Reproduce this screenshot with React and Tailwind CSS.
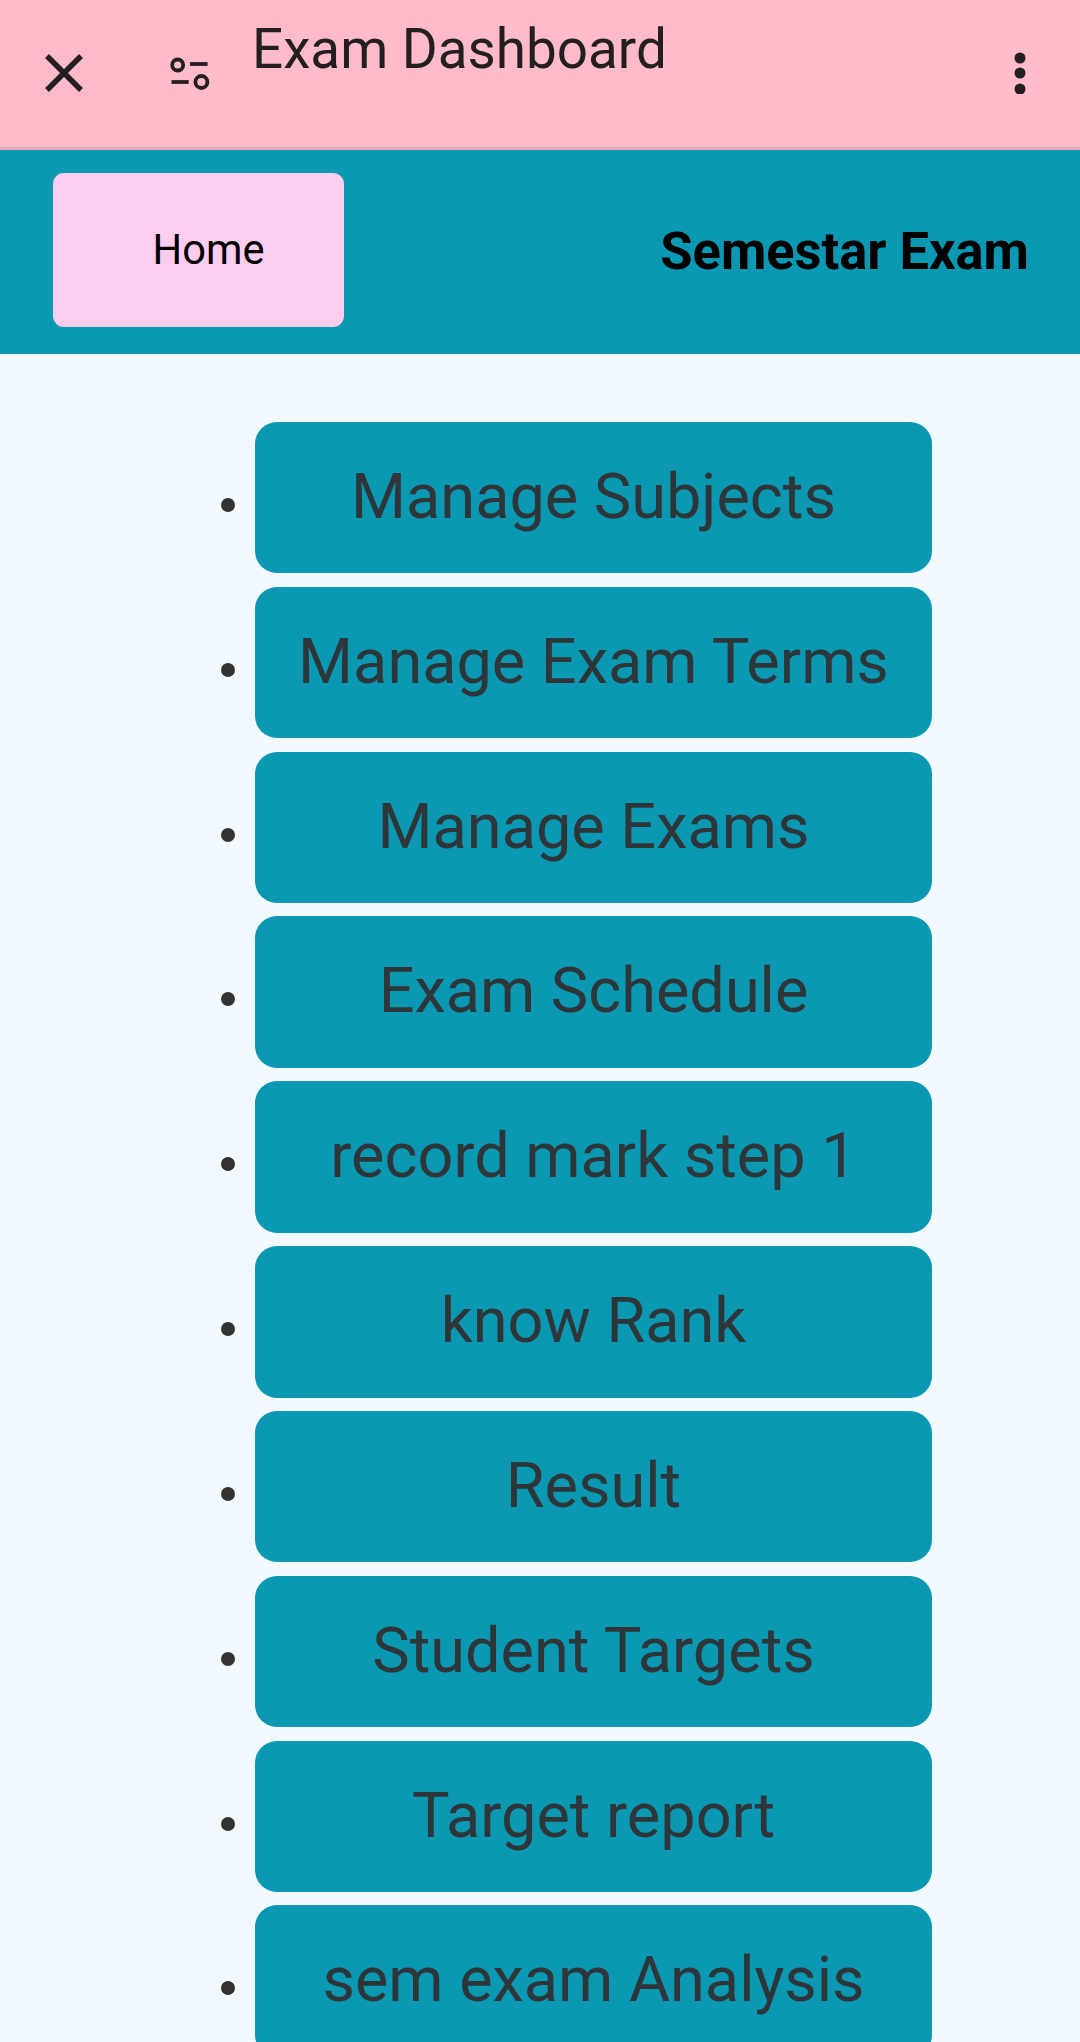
const items = ["Manage Subjects","Manage Exam Terms","Manage Exams","Exam Schedule","record mark step 1","know Rank","Result","Student Targets","Target report","sem exam Analysis"];

export default function App() {
  return (
    <div className="h-[2042px] w-[1080px] overflow-hidden bg-[#f3faff] font-['Roboto',sans-serif]">
      <header className="flex h-[150px] items-start border-b-[3px] border-[#e8aab6] bg-[#ffbbc9] text-[#231f20]">
        <svg className="mt-[52px] ml-[43px] h-[42px] w-[42px]" viewBox="0 0 42 42" fill="none" stroke="#231f20" strokeWidth="5.5">
          <path d="M4 4 L38 38 M38 4 L4 38" />
        </svg>
        <svg className="mt-[55px] ml-[83px] h-[36px] w-[44px]" viewBox="0 0 44 36" fill="none" stroke="#231f20" strokeWidth="3.8">
          <circle cx="9.7" cy="10" r="5.5" />
          <path d="M22 9 H39.6" />
          <path d="M3.5 27 H20.7" />
          <circle cx="33.4" cy="27" r="6" />
        </svg>
        <h1 className="ml-[40px] mt-[17px] text-[54.8px] leading-[64px] font-normal">Exam Dashboard</h1>
        <svg className="ml-auto mt-[52px] mr-[54px] h-[42px] w-[12px]" viewBox="0 0 12 42" fill="#231f20">
          <circle cx="6" cy="6" r="5.5" />
          <circle cx="6" cy="21" r="5.5" />
          <circle cx="6" cy="37" r="5.5" />
        </svg>
      </header>
      <section className="flex h-[204px] items-start justify-between bg-[#0b98b2] pl-[53px] pr-[51px] pt-[23px]">
        <button className="flex h-[154px] w-[291px] items-center justify-center rounded-[11px] bg-[#fdcdee] pl-[20px] text-[41.6px] text-black">Home</button>
        <h2 className="mt-[43px] text-[52.4px] leading-[70px] font-bold text-black">Semestar Exam</h2>
      </section>
      <ul className="list-disc pl-[255px] pt-[68px] text-[44px] text-[#333]">
        {items.map((t) => (
          <li key={t} className="mb-[13.45px] w-[677px]">
            <div className="h-[151.4px] rounded-[22px] bg-[#0b98b2] pt-[38px] text-center text-[63px] leading-[74px] text-[#2e3639]">{t}</div>
          </li>
        ))}
      </ul>
    </div>
  );
}
